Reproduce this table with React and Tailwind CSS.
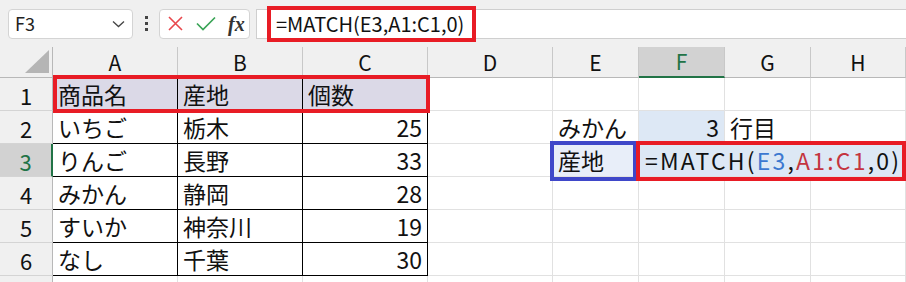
import React from "react";

const COLS = ["A", "B", "C", "D", "E", "F", "G", "H"];

const TABLE = [
  ["商品名", "産地", "個数"],
  ["いちご", "栃木", "25"],
  ["りんご", "長野", "33"],
  ["みかん", "静岡", "28"],
  ["すいか", "神奈川", "19"],
  ["なし", "千葉", "30"],
];

function Toolbar() {
  return (
    <div className="flex h-[47px] items-center bg-[#f0f0f0] pl-[8px]">
      <div className="flex h-[30px] w-[125px] items-center justify-between rounded-[4px] border border-[#d4d4d4] bg-white pl-[6px] pr-[7px]">
        <span className="text-[18px] text-[#222]">F3</span>
        <svg width="13" height="8" viewBox="0 0 13 8">
          <path d="M1 1.5 L6.5 6.5 L12 1.5" fill="none" stroke="#444" strokeWidth="1.3" />
        </svg>
      </div>
      <div className="ml-[11px] flex w-[4px] flex-col items-center gap-[3px]">
        <span className="block h-[3px] w-[3px] bg-[#444]" />
        <span className="block h-[3px] w-[3px] bg-[#444]" />
        <span className="block h-[3px] w-[3px] bg-[#444]" />
      </div>
      <div className="ml-[11px] flex h-[30px] w-[91px] items-center rounded-[4px] border border-[#d4d4d4] bg-white pl-[8px]">
        <svg width="15" height="15" viewBox="0 0 15 15">
          <path d="M1 1 L14 14 M14 1 L1 14" stroke="#e8474c" strokeWidth="1.6" fill="none" />
        </svg>
        <svg className="ml-[13px]" width="20" height="15" viewBox="0 0 20 15">
          <path d="M1 7.5 L7 13.5 L19 1.5" stroke="#3aa457" strokeWidth="1.7" fill="none" />
        </svg>
        <span className="ml-[12px] font-['Liberation_Serif',serif] text-[20px] font-bold italic leading-none text-[#333]">
          fx
        </span>
      </div>
      <div className="ml-[6px] flex h-[30px] flex-1 items-center border-y border-l border-[#cfcfcf] bg-white pl-[19px]">
        <span className="text-[20px] leading-none text-[#111]">=MATCH(E3,A1:C1,0)</span>
      </div>
    </div>
  );
}

function ColHeader({ label }) {
  const active = label === "F";
  return (
    <div
      className={
        "flex items-end justify-center border-r border-[#c8c8c8] pb-[2px] text-[21px] leading-[26px] " +
        (active
          ? "border-b-[2px] border-b-[#217346] bg-[#d2d2d2] text-[#217346]"
          : "border-b border-b-[#b8b8b8] bg-[#f0f0f0] text-[#111]")
      }
    >
      {label}
    </div>
  );
}

function RowHeader({ n }) {
  const active = n === 3;
  return (
    <div
      className={
        "flex items-end justify-center border-b border-[#d4d4d4] pb-[1px] text-[22px] leading-[28px] " +
        (active
          ? "border-r-[2px] border-r-[#217346] bg-[#d2d2d2] text-[#217346]"
          : "border-r border-r-[#b8b8b8] bg-[#f0f0f0] text-[#111]")
      }
    >
      {n}
    </div>
  );
}

function Cell({ children, table, right, bg, extra = "" }) {
  return (
    <div
      className={
        "flex items-end overflow-visible whitespace-nowrap pb-[1px] text-[23px] leading-[30px] text-[#111] " +
        (table ? "border-b border-r border-black " : "border-b border-r border-[#e1e1e1] ") +
        (right ? "justify-end pr-[5px] " : "justify-start pl-[5px] ") +
        (bg || "bg-white") +
        " " +
        extra
      }
    >
      {children}
    </div>
  );
}

export default function App() {
  return (
    <div className="relative h-[282px] w-[906px] overflow-hidden bg-white font-['Noto_Sans_CJK_JP',sans-serif]">
      <Toolbar />

      <div className="grid grid-cols-[53px_125px_125px_125px_125px_86px_86px_86px_95px] grid-rows-[31px_repeat(7,33px)]">
        {/* corner */}
        <div className="relative border-b border-r border-[#b8b8b8] bg-[#f0f0f0]">
          <svg className="absolute bottom-[4px] right-[3px]" width="24" height="23" viewBox="0 0 24 23">
            <path d="M24 0 L24 23 L0 23 Z" fill="#b5b5b5" />
          </svg>
        </div>
        {COLS.map((c) => (
          <ColHeader key={c} label={c} />
        ))}

        {/* row 1 */}
        <RowHeader n={1} />
        {TABLE[0].map((t, i) => (
          <Cell key={i} table bg="bg-[#dbd9e7]">
            {t}
          </Cell>
        ))}
        <Cell />
        <Cell />
        <Cell />
        <Cell />
        <Cell />

        {/* row 2 */}
        <RowHeader n={2} />
        <Cell table>{TABLE[1][0]}</Cell>
        <Cell table>{TABLE[1][1]}</Cell>
        <Cell table right>{TABLE[1][2]}</Cell>
        <Cell />
        <Cell>みかん</Cell>
        <Cell right bg="bg-[#dde8f5]">3</Cell>
        <Cell extra="pl-[3px]">行目</Cell>
        <Cell />

        {/* row 3: F3 is being edited, its formula runs over G3 and H3 */}
        <RowHeader n={3} />
        <Cell table>{TABLE[2][0]}</Cell>
        <Cell table>{TABLE[2][1]}</Cell>
        <Cell table right>{TABLE[2][2]}</Cell>
        <Cell />
        <Cell bg="bg-[#e8eef9]">産地</Cell>
        <div className="col-span-3 flex items-end whitespace-nowrap border-b border-[#e1e1e1] bg-[#dde8f5] pb-[1px] pl-[6px] text-[23px] leading-[30px] tracking-[2.2px] text-[#111]">
          <span>=MATCH(</span>
          <span className="text-[#3c78d0]">E3</span>
          <span>,</span>
          <span className="text-[#c4353f]">A1:C1</span>
          <span>,0)</span>
        </div>

        {/* rows 4-6 */}
        {[3, 4, 5].map((r) => (
          <React.Fragment key={r}>
            <RowHeader n={r + 1} />
            <Cell table>{TABLE[r][0]}</Cell>
            <Cell table>{TABLE[r][1]}</Cell>
            <Cell table right>
              {TABLE[r][2]}
            </Cell>
            <Cell />
            <Cell />
            <Cell />
            <Cell />
            <Cell />
          </React.Fragment>
        ))}

        {/* row 7, only its top edge shows */}
        <div className="border-r border-[#b8b8b8] bg-[#f0f0f0]" />
        {[0, 1, 2, 3, 4, 5, 6, 7].map((i) => (
          <Cell key={i} />
        ))}
      </div>

      {/* highlight frames */}
      <div className="pointer-events-none absolute left-[267px] top-[6px] h-[36px] w-[209px] border-[4px] border-[#e81c25]" />
      <div className="pointer-events-none absolute left-[53px] top-[75px] h-[38px] w-[377px] border-[4px] border-[#e81c25]" />
      <div className="pointer-events-none absolute left-[550px] top-[141px] h-[40px] w-[87px] border-[4px] border-[#3f47c9]" />
      <div className="pointer-events-none absolute left-[636px] top-[141px] h-[40px] w-[270px] border-[4px] border-[#e81c25]" />
    </div>
  );
}
